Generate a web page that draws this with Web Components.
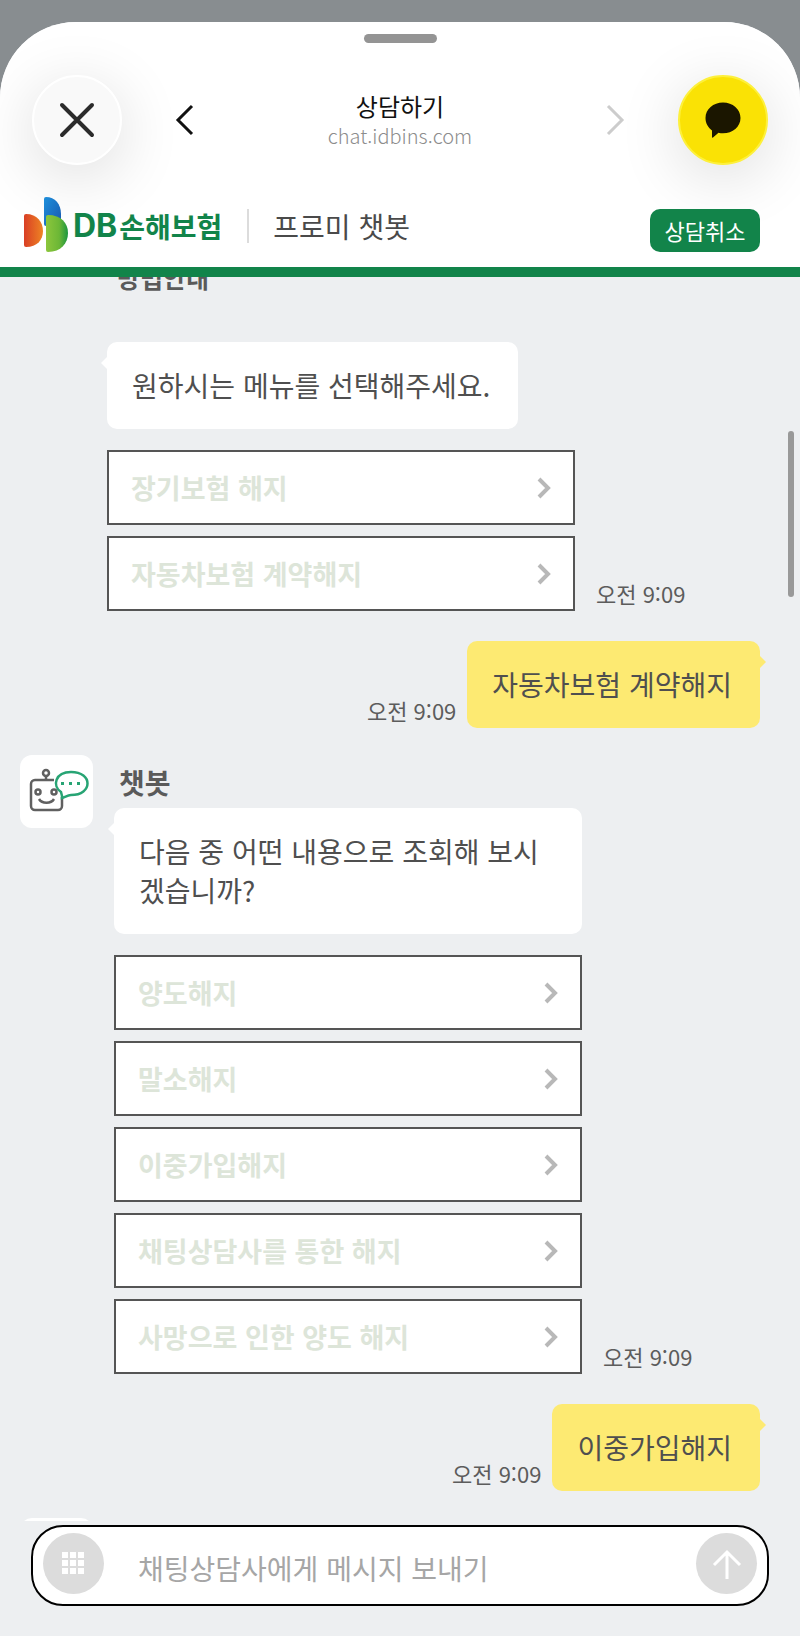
<!DOCTYPE html>
<html lang="ko">
<head>
<meta charset="utf-8">
<meta name="viewport" content="width=device-width, initial-scale=1">
<title>상담하기</title>
<style>
  html, body { height: 100%; }
  body {
    margin: 0;
    background: #888d90;
    color: #4f4f4f;
    font-family: "Noto Sans CJK KR", "Noto Sans", sans-serif;
    font-size: 28px;
    line-height: 39px;
  }
</style>
</head>
<body>
<chat-sheet>
  <sheet-nav slot="top" heading="상담하기" host="chat.idbins.com"></sheet-nav>
  <brand-header slot="top" brand="손해보험" heading="프로미 챗봇" action="상담취소"></brand-header>

  <chat-message heading="방법안내" continued time="오전 9:09">
    <chat-bubble>원하시는 메뉴를 선택해주세요.</chat-bubble>
    <chat-option>장기보험 해지</chat-option>
    <chat-option>자동차보험 계약해지</chat-option>
  </chat-message>
  <chat-message mine time="오전 9:09">
    <chat-bubble mine>자동차보험 계약해지</chat-bubble>
  </chat-message>
  <chat-message heading="챗봇" avatar time="오전 9:09">
    <chat-bubble>다음 중 어떤 내용으로 조회해 보시겠습니까?</chat-bubble>
    <chat-option>양도해지</chat-option>
    <chat-option>말소해지</chat-option>
    <chat-option>이중가입해지</chat-option>
    <chat-option>채팅상담사를 통한 해지</chat-option>
    <chat-option>사망으로 인한 양도 해지</chat-option>
  </chat-message>
  <chat-message mine time="오전 9:09">
    <chat-bubble mine>이중가입해지</chat-bubble>
  </chat-message>
  <chat-message avatar></chat-message>

  <chat-composer slot="bottom" placeholder="채팅상담사에게 메시지 보내기"></chat-composer>
</chat-sheet>

<script>
const define = (name, html, setup) => {
  const template = document.createElement("template");
  template.innerHTML = html;
  customElements.define(name, class extends HTMLElement {
    constructor() {
      super();
      this.attachShadow({ mode: "open" });
    }
    connectedCallback() {
      if (this.shadowRoot.firstChild) return;
      this.shadowRoot.appendChild(template.content.cloneNode(true));
      if (setup) setup(this, (selector) => this.shadowRoot.querySelector(selector));
    }
  });
};

define("chat-sheet", `
  <style>
    :host { display: block; height: 100%; padding-top: 22px; box-sizing: border-box; }
    .sheet {
      height: 100%; display: flex; flex-direction: column; position: relative;
      background: #edeff1; border-radius: 76px 76px 0 0; overflow: hidden;
    }
    .top { background: #fff; border-bottom: 10px solid #12844a; }
    .log { flex: 1; min-height: 0; overflow: hidden; }
    /* the log is scrolled so that the first heading is half under the header */
    .scroll { display: flex; flex-direction: column; gap: 30px; margin-top: -20px; }
    .thumb {
      position: absolute; right: 6px; top: 409px; width: 6px; height: 166px;
      border-radius: 3px; background: #999;
    }
  </style>
  <div class="sheet">
    <div class="top"><slot name="top"></slot></div>
    <div class="log"><div class="scroll"><slot></slot></div></div>
    <slot name="bottom"></slot>
    <div class="thumb"></div>
  </div>
`);

define("sheet-nav", `
  <style>
    :host { display: block; padding-top: 12px; text-align: center; }
    .handle { width: 73px; height: 9px; margin: 0 auto; border-radius: 5px; background: #949494; }
    nav { display: flex; align-items: center; padding: 32px 32px 0; }
    button { border: 0; padding: 0; background: none; display: grid; place-items: center; flex: none; }
    .round {
      width: 90px; height: 90px; border-radius: 50%; box-sizing: border-box;
      border: 2px solid #fff; background: #f9f9f9;
      box-shadow: 0 12px 64px rgba(0, 0, 0, .14);
    }
    .talk { background: #fae205; border-color: #fdf03c; }
    .step { width: 48px; height: 48px; margin: 0 38px; }
    .page { flex: 1; min-width: 0; }
    h1 { margin: 0; font-size: 24px; line-height: 32px; font-weight: 400; color: #111; }
    p { margin: 0; font-size: 20px; line-height: 28px; font-weight: 300; color: #8c8c8c; }
  </style>
  <div class="handle"></div>
  <nav>
    <button class="round" aria-label="닫기">
      <svg width="36" height="36" fill="none" stroke="#2b2b2b" stroke-width="4" stroke-linecap="round"><path d="M3 3l30 30M33 3L3 33"/></svg>
    </button>
    <button class="step" aria-label="뒤로">
      <svg width="20" height="32" fill="none" stroke="#111" stroke-width="3"><path d="M18 2L4 16l14 14"/></svg>
    </button>
    <div class="page"><h1></h1><p></p></div>
    <button class="step" aria-label="앞으로" disabled>
      <svg width="20" height="32" fill="none" stroke="#ccc" stroke-width="3"><path d="M2 2l14 14L2 30"/></svg>
    </button>
    <button class="round talk" aria-label="채팅">
      <svg width="36" height="36" fill="#1b1600"><path d="M18 .5c9.700 0 17.500 6.700 17.500 15.400S27.700 31.300 18 31.300c-1.600 0-3.100-.1-4.500-.5L8 35.500c-.5.400-1 .1-1-.5v-6.600C3 25.500.5 21 .5 15.900.5 7.200 8.300.5 18 .5z"/></svg>
    </button>
  </nav>
`, (el, $) => {
  $("h1").textContent = el.getAttribute("heading");
  $("p").textContent = el.getAttribute("host");
});

define("brand-header", `
  <style>
    :host {
      display: flex; align-items: center; padding: 23px 40px 3px 23px;
      height: 76px; color: #12844a;
    }
    .logo { display: flex; align-items: center; }
    svg { flex: none; margin-bottom: 4px; }
    b { margin-left: 4px; font: 700 32px/40px Inter, sans-serif; }
    strong { font-size: 28px; font-weight: 700; margin-left: 2px; }
    h2 {
      flex: 1; margin: 0 0 0 25px; padding-left: 24px; border-left: 2px solid #dcdcdc;
      font-size: 28px; line-height: 34px; font-weight: 400; color: #4a4a4a;
    }
    button {
      margin-top: 8px; width: 110px; height: 43px; border: 0; border-radius: 10px; padding: 0;
      background: #12844a; color: #fff; font: inherit; font-size: 22px; line-height: 32px;
    }
  </style>
  <div class="logo">
    <svg width="46" height="56" viewBox="0 0 46 56">
      <defs>
        <linearGradient id="r" x1="0" x2="1"><stop stop-color="#d93f25"/><stop offset="1" stop-color="#ee8424"/></linearGradient>
        <linearGradient id="u" x1="0" x2="1" y2="1"><stop stop-color="#1e90dc"/><stop offset="1" stop-color="#1857ae"/></linearGradient>
        <linearGradient id="g" x1="0" x2="1"><stop stop-color="#8cc63c"/><stop offset=".6" stop-color="#6cb736"/><stop offset="1" stop-color="#1c9640"/></linearGradient>
      </defs>
      <path fill="url(#u)" d="M23 1C32 1 38 8 38 18v6L24 30H23Q21 30 21 28V3Q21 1 23 1z"/>
      <path fill="url(#r)" d="M3 18C14 18 20 26 20 35S14 51 3 51Q1 51 1 49V20Q1 18 3 18z"/>
      <path fill="url(#g)" d="M25 19C38 19 45 27 45 37S38 56 25 56Q23 56 23 54V21Q23 19 25 19z"/>
    </svg>
    <b>DB</b><strong></strong>
  </div>
  <h2></h2>
  <button></button>
`, (el, $) => {
  $("strong").textContent = el.getAttribute("brand");
  $("h2").textContent = el.getAttribute("heading");
  $("button").textContent = el.getAttribute("action");
});

define("chat-message", `
  <style>
    :host {
      display: grid; grid-template-columns: 73px minmax(0, 468px) auto; column-gap: 21px;
      justify-content: start; padding: 0 40px 0 20px;
    }
    :host([continued]) { grid-template-columns: 66px minmax(0, 468px) auto; }
    :host([avatar]) { margin-top: -3px; }
    :host([mine]) { display: flex; flex-direction: row-reverse; justify-content: flex-start; gap: 11px; }
    :host([mine]) .avatar { display: none; }
    .avatar { width: 73px; height: 73px; border-radius: 12px; visibility: hidden; background: #fff; }
    :host([avatar]) .avatar { visibility: visible; }
    .avatar svg { display: block; }
    .body { display: flex; flex-direction: column; align-items: start; gap: 11px; }
    .heading { padding-left: 5px; font-weight: 700; line-height: 41px; color: #5a5a5a; }
    :host([avatar]) .heading { margin: 7px 0 -6px; }
    :host([continued]) .heading { font-size: 25px; padding-left: 10px; margin: 0 0 33px; }
    :host(:not([heading])) .heading { display: none; }
    time { align-self: end; padding-bottom: 2px; font-size: 22px; line-height: 32px; color: #5c5c5c; white-space: nowrap; }
  </style>
  <div class="avatar">
    <svg width="73" height="73" fill="none" stroke="#606060" stroke-width="2.500">
      <circle cx="26" cy="18" r="3"/><path d="M26 21v5"/>
      <path d="M34 25H15a4 4 0 0 0-4 4v22a4 4 0 0 0 4 4h23a4 4 0 0 0 4-4V42"/>
      <circle cx="18" cy="37" r="2.500"/><circle cx="34" cy="37" r="2.500"/>
      <path d="M19 44c3 5 12 5 15 0"/>
      <path stroke="#27a474" d="M42 41l-1-4c-9-6-6-20 10-20 22 0 22 23 0 23-3 0-6 2-9 3z"/>
      <path fill="#27a474" stroke="none" d="M41 27h3v3h-3zM49 27h3v3h-3zM57 27h3v3h-3z"/>
    </svg>
  </div>
  <div class="body"><div class="heading"></div><slot></slot></div>
  <time></time>
`, (el, $) => {
  $(".heading").textContent = el.getAttribute("heading");
  $("time").textContent = el.getAttribute("time");
});

define("chat-bubble", `
  <style>
    :host {
      display: block; position: relative; padding: 24px 28px 24px 25px;
      border-radius: 10px; background: #fff; margin-bottom: 10px;
      word-break: break-all;
    }
    :host([mine]) { background: #fdea72; margin-bottom: 0; }
    :host::before {
      content: ""; position: absolute; top: 15px; left: -6px;
      border: 6px solid transparent; border-left: 0; border-right-color: #fff;
    }
    :host([mine])::before {
      left: auto; right: -6px;
      border: 6px solid transparent; border-right: 0; border-left-color: #fdea72;
    }
  </style>
  <slot></slot>
`);

define("chat-option", `
  <style>
    :host { display: block; width: 100%; }
    button {
      width: 100%; height: 75px; box-sizing: border-box; padding: 0 22px;
      display: flex; align-items: center; justify-content: space-between;
      border: 2px solid #555; background: #fff; color: #dde5d9;
      font: inherit; font-size: 27px; font-weight: 700; text-align: left;
    }
  </style>
  <button>
    <slot></slot>
    <svg width="14" height="22" fill="none" stroke="#b8b8b8" stroke-width="4"><path d="M2 2l9 9-9 9"/></svg>
  </button>
`);

define("chat-composer", `
  <style>
    :host { display: block; padding: 4px 31px 30px; }
    form {
      display: flex; align-items: center; height: 81px; box-sizing: border-box; padding: 0 10px 4px;
      border: 2px solid #000; border-radius: 32px; background: #fff;
    }
    button {
      width: 61px; height: 61px; flex: none; border: 0; border-radius: 50%; padding: 0;
      background: #dcdcdc; display: grid; place-items: center;
    }
    input {
      flex: 1; min-width: 0; border: 0; outline: 0; padding: 10px 0 0 34px; background: none;
      font: inherit; color: #4f4f4f;
    }
    input::placeholder { color: #a6a6a6; opacity: 1; }
  </style>
  <form>
    <button type="button" aria-label="메뉴">
      <svg width="23" height="23" fill="#fff"><path d="M0 0h6v6H0zM8 0h6v6H8zM16 0h6v6h-6zM0 8h6v6H0zM8 8h6v6H8zM16 8h6v6h-6zM0 16h6v6H0zM8 16h6v6H8zM16 16h6v6h-6z"/></svg>
    </button>
    <input type="text" aria-label="메시지">
    <button type="button" aria-label="보내기">
      <svg width="30" height="30" fill="none" stroke="#fff" stroke-width="3"><path d="M15 30V3M2 16L15 3l13 13"/></svg>
    </button>
  </form>
`, (el, $) => {
  $("input").placeholder = el.getAttribute("placeholder");
});
</script>
</body>
</html>
